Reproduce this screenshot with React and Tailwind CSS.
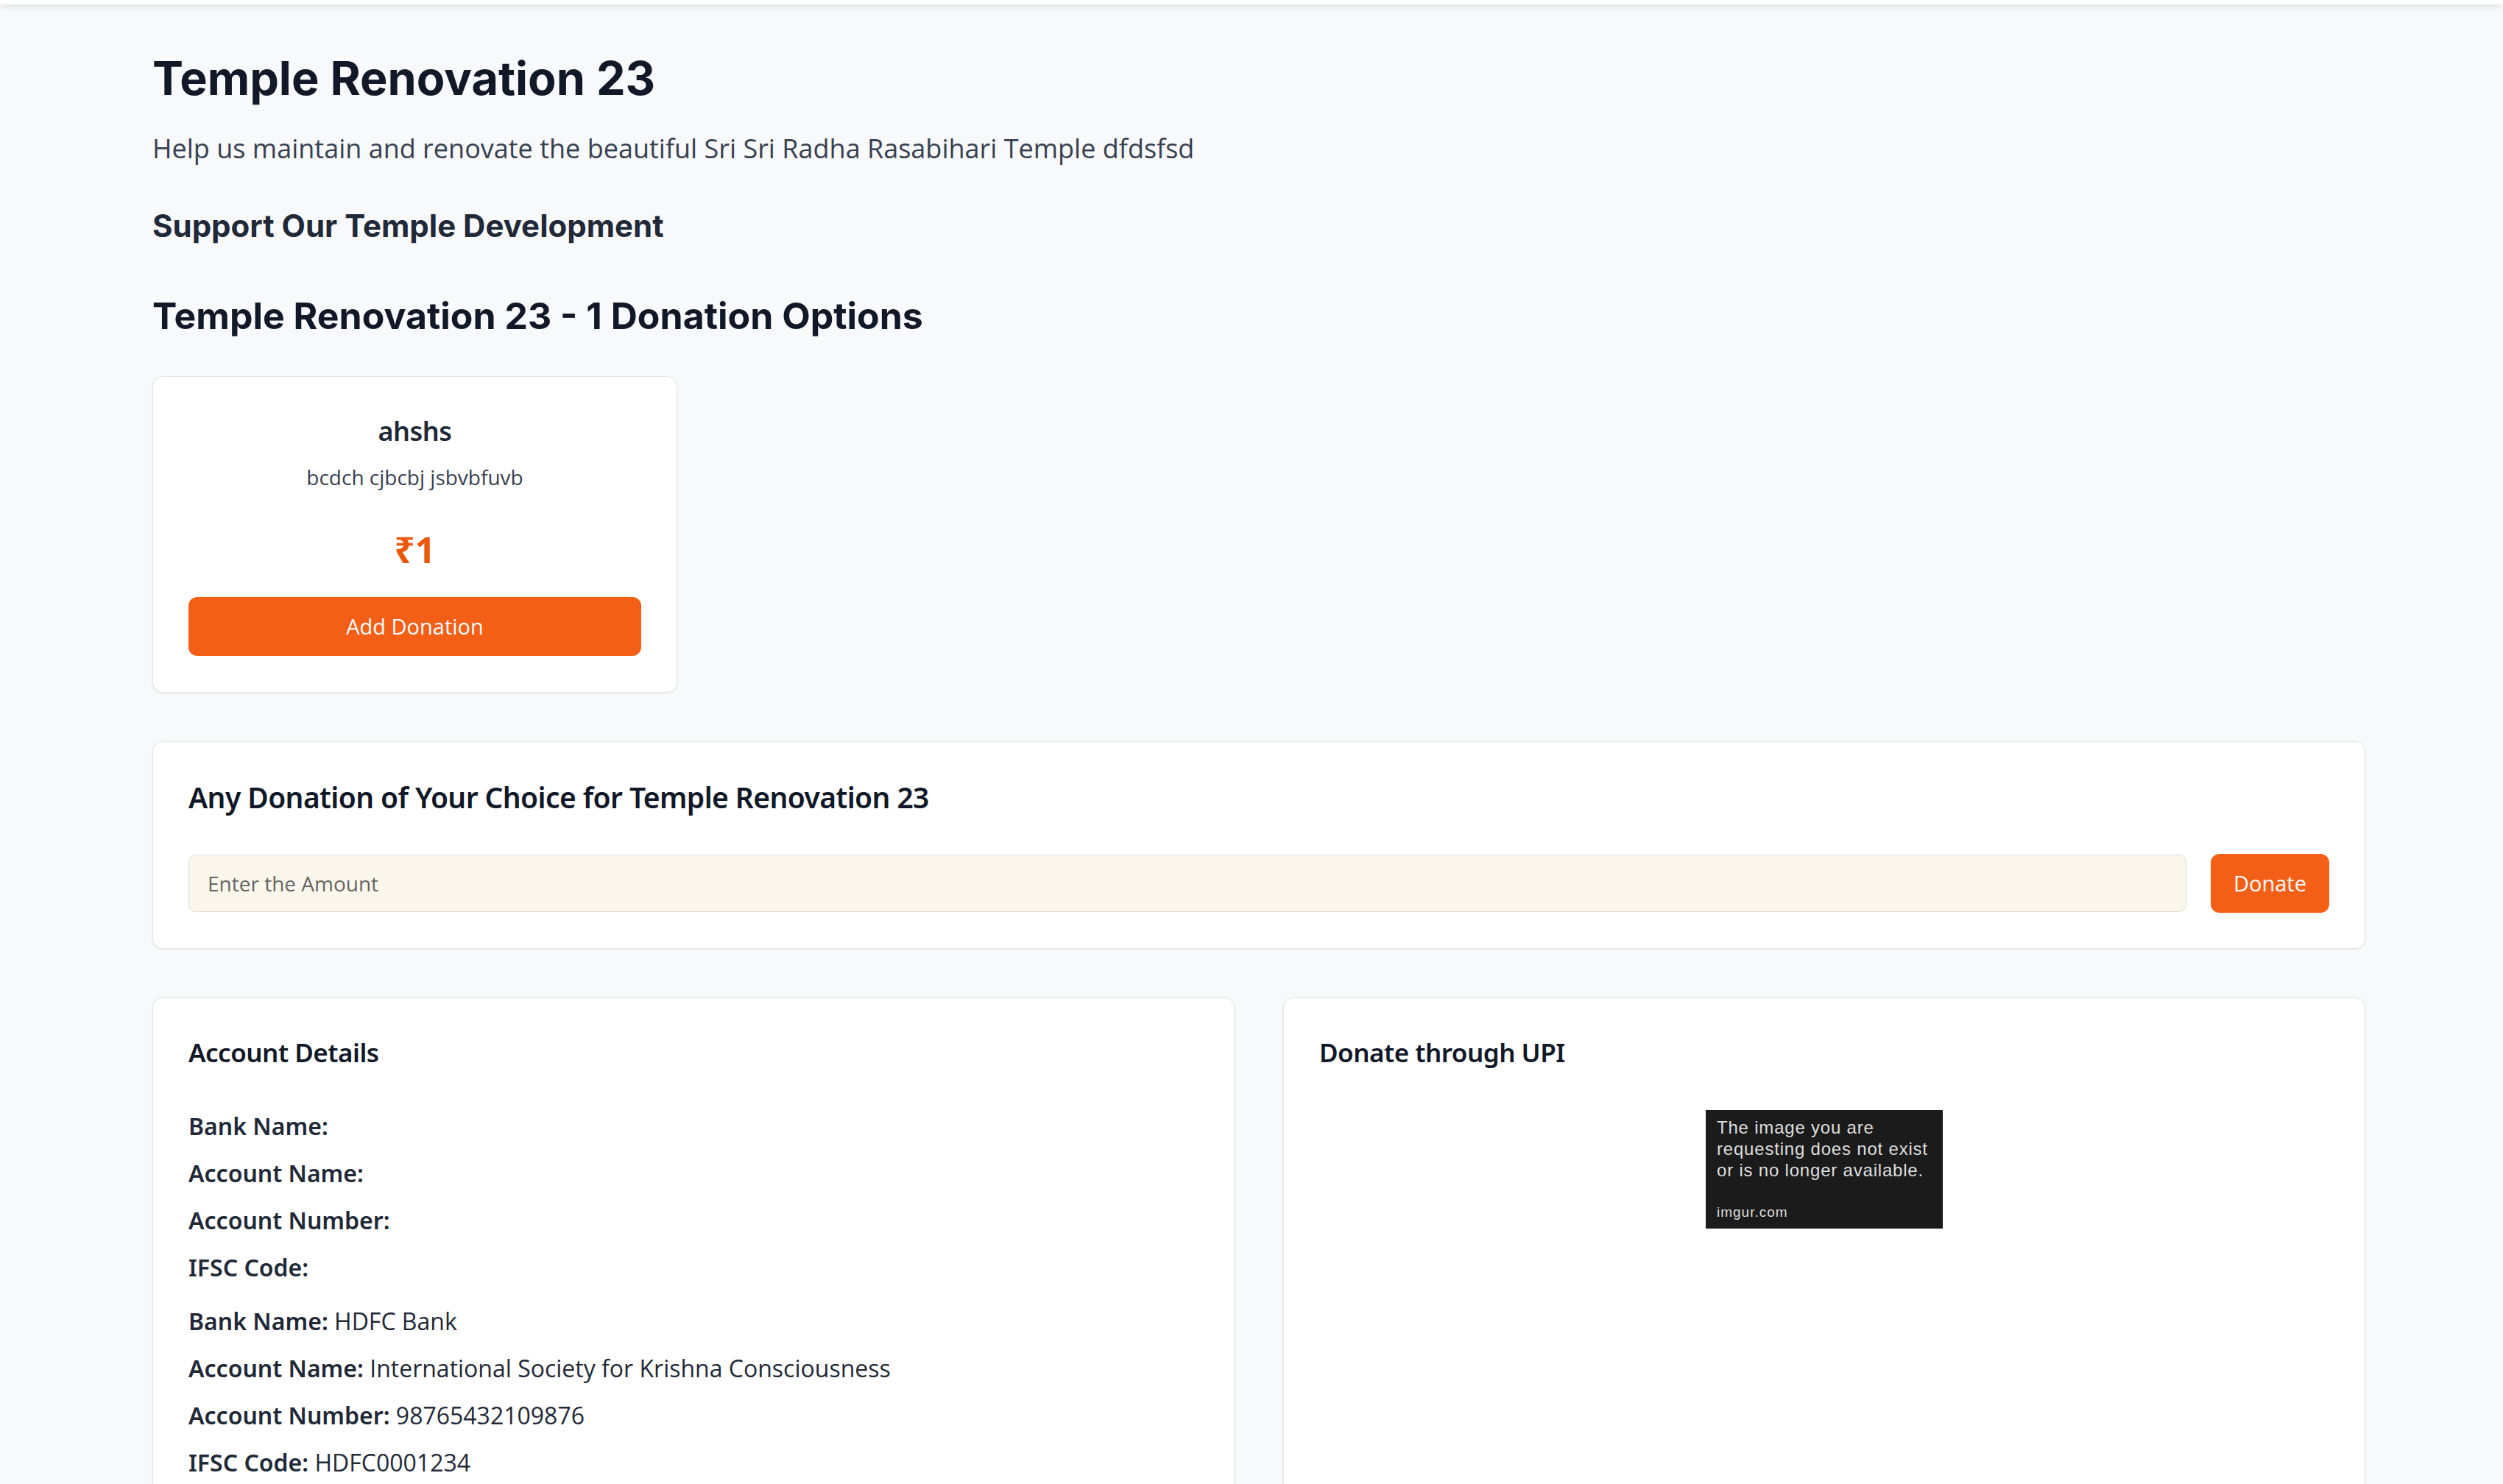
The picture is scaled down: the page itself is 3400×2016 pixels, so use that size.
import React from "react";

const head = "font-['Inter','Noto_Sans',sans-serif]";
const body = "font-['Open_Sans','Noto_Sans',sans-serif]";
const semi = "font-['Noto_Sans','Open_Sans',sans-serif] font-semibold";

const emptyRows = ["Bank Name:", "Account Name:", "Account Number:", "IFSC Code:"];
const bankRows = [
  ["Bank Name:", "HDFC Bank"],
  ["Account Name:", "International Society for Krishna Consciousness"],
  ["Account Number:", "98765432109876"],
  ["IFSC Code:", "HDFC0001234"],
];

function Card({ className = "", children }) {
  return (
    <div className={`bg-white border border-[#e3e6ea] rounded-[14px] shadow-[0_1px_3px_rgba(0,0,0,0.08)] p-[48px] ${className}`}>
      {children}
    </div>
  );
}

function MissingImage() {
  return (
    <div className="w-[322px] h-[161px] overflow-hidden bg-[#1b1b1b] px-[15px] pt-[9px] font-['Liberation_Sans',Arial,sans-serif] text-[#dedede] whitespace-nowrap">
      <div className="text-[24px] leading-[29px] tracking-[0.8px]">
        <div>The image you are</div>
        <div>requesting does not exist</div>
        <div>or is no longer available.</div>
      </div>
      <div className="mt-[33px] text-[19px] leading-[20px] tracking-[1px]">imgur.com</div>
    </div>
  );
}

export default function App() {
  return (
    <div className={`min-h-[2016px] bg-[#f8f9fb] ${body}`}>
      <div className="h-[6px] bg-white shadow-[0_3px_8px_rgba(0,0,0,0.12)]" />
      <main className="pl-[207px] w-[3213px] pt-[69px] pb-[80px]">
        <h1 className={`${head} font-bold text-[63px] leading-none text-[#111827]`}>
          Temple Renovation 23
        </h1>
        <p className="mt-[37px] text-[36px] leading-[1.5] text-[#374151]">
          Help us maintain and renovate the beautiful Sri Sri Radha Rasabihari Temple dfdsfsd
        </p>
        <h2 className={`${head} mt-[57px] font-bold text-[42px] leading-none text-[#1f2937]`}>
          Support Our Temple Development
        </h2>
        <h2 className={`${head} mt-[76px] font-bold text-[50px] leading-none text-[#111827]`}>
          Temple Renovation 23 - 1 Donation Options
        </h2>

        <Card className="mt-[57px] w-[713px] h-[430px] text-center">
          <div className={`${semi} text-[36px] leading-[52px] tracking-[-0.5px] text-[#1f2937]`}>ahshs</div>
          <div className="mt-[14px] text-[28px] leading-[44px] text-[#374151]">bcdch cjbcbj jsbvbfuvb</div>
          <div className="mt-[52px] text-[49px] leading-none font-bold text-[#ea580c]">₹1</div>
          <button className="mt-[40px] w-full h-[80px] rounded-[12px] bg-[#f45f17] text-white text-[29px] font-medium">
            Add Donation
          </button>
        </Card>

        <Card className="mt-[66px]">
          <h3 className={`${semi} text-[39px] leading-[54px] tracking-[-0.6px] text-[#111827]`}>
            Any Donation of Your Choice for Temple Renovation 23
          </h3>
          <div className="mt-[50px] flex items-center gap-[33px]">
            <input
              type="text"
              placeholder="Enter the Amount"
              className="flex-1 h-[78px] rounded-[10px] border-[1.5px] border-[#dcdcdc] bg-[#faf6eb] px-[25px] text-[28px] text-[#374151] placeholder:text-[#666666] outline-none"
            />
            <button className="w-[161px] h-[80px] rounded-[12px] bg-[#f45f17] text-white text-[29px] font-medium">
              Donate
            </button>
          </div>
        </Card>

        <div className="mt-[66px] grid grid-cols-2 gap-[66px]">
          <Card>
            <h3 className={`${semi} text-[35px] leading-[52px] tracking-[-0.5px] text-[#111827]`}>Account Details</h3>
            <div className="mt-[48px] flex flex-col gap-[13px] text-[32px] leading-[51px] text-[#1f2937]">
              {emptyRows.map((r) => (
                <div key={r} className={semi}>{r}</div>
              ))}
            </div>
            <div className="mt-[22px] flex flex-col gap-[13px] text-[32px] leading-[51px] text-[#1f2937]">
              {bankRows.map(([k, v]) => (
                <div key={k}>
                  <span className={semi}>{k}</span> {v}
                </div>
              ))}
            </div>
          </Card>
          <Card>
            <h3 className={`${semi} text-[35px] leading-[52px] tracking-[-0.5px] text-[#111827]`}>Donate through UPI</h3>
            <div className="mt-[52px] flex justify-center">
              <MissingImage />
            </div>
          </Card>
        </div>
      </main>
    </div>
  );
}
